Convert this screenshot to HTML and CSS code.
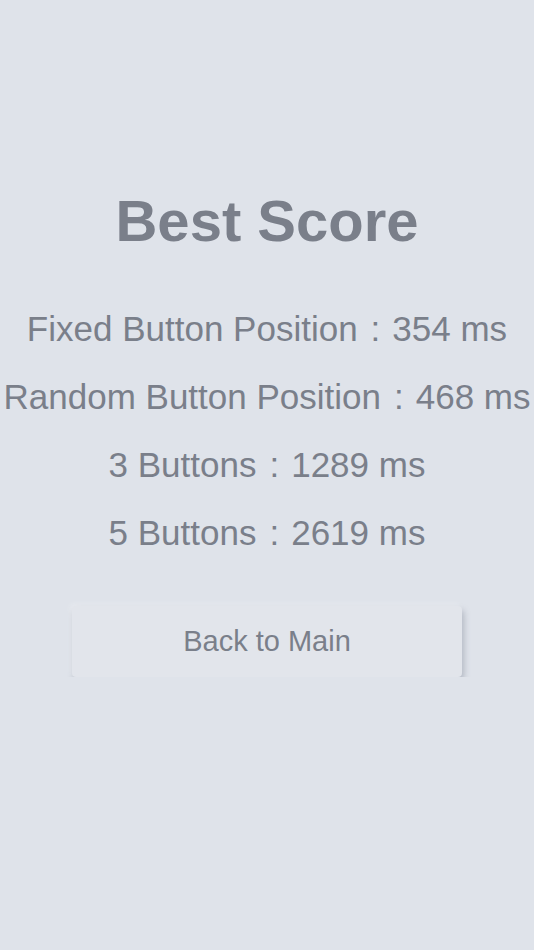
FILE: index.html
```html
<!DOCTYPE html>
<html>
<head>
    <meta name="viewport" content="width=device-width, initial-scale=1.0">
    <link rel="stylesheet" href="styles.css">
</head>
<body>
<div class="container">
    <h1 class="title">Best Score</h1>
    <div class="scores">
        <p class="score-row">Fixed Button Position<span class="sep">:</span>354 ms</p>
        <p class="score-row">Random Button Position<span class="sep">:</span>468 ms</p>
        <p class="score-row">3 Buttons<span class="sep">:</span>1289 ms</p>
        <p class="score-row">5 Buttons<span class="sep">:</span>2619 ms</p>
    </div>
    <button class="button">Back to Main</button>
</div>
</body>
</html>
```

FILE: styles.css
```css
body {
    font-family: "Liberation Sans", Arial, sans-serif;
    margin: 0;
    padding: 0;
    background-color: #dfe3ea;
    color: #7a7f8a;
}

.container {
    display: flex;
    flex-direction: column;
    align-items: center;
    padding-top: 192px;
}

.title {
    font-size: 58px;
    font-weight: bold;
    line-height: 58px;
    margin: 0 0 45px 0;
}

.scores {
    display: flex;
    flex-direction: column;
    align-items: center;
}

.score-row {
    font-size: 35px;
    line-height: 68px;
    margin: 0;
    white-space: nowrap;
}

.sep {
    margin: 0 12px 0 13px;
}

.button {
    width: 390px;
    height: 71px;
    margin-top: 39px;
    font-family: "Liberation Sans", Arial, sans-serif;
    font-size: 29px;
    color: #7a7f8a;
    background-color: #e2e5eb;
    border: none;
    border-radius: 4px;
    box-shadow: 2px 4px 6px rgba(110, 118, 135, 0.4), -2px -2px 5px rgba(255, 255, 255, 0.3);
    cursor: pointer;
}
```
